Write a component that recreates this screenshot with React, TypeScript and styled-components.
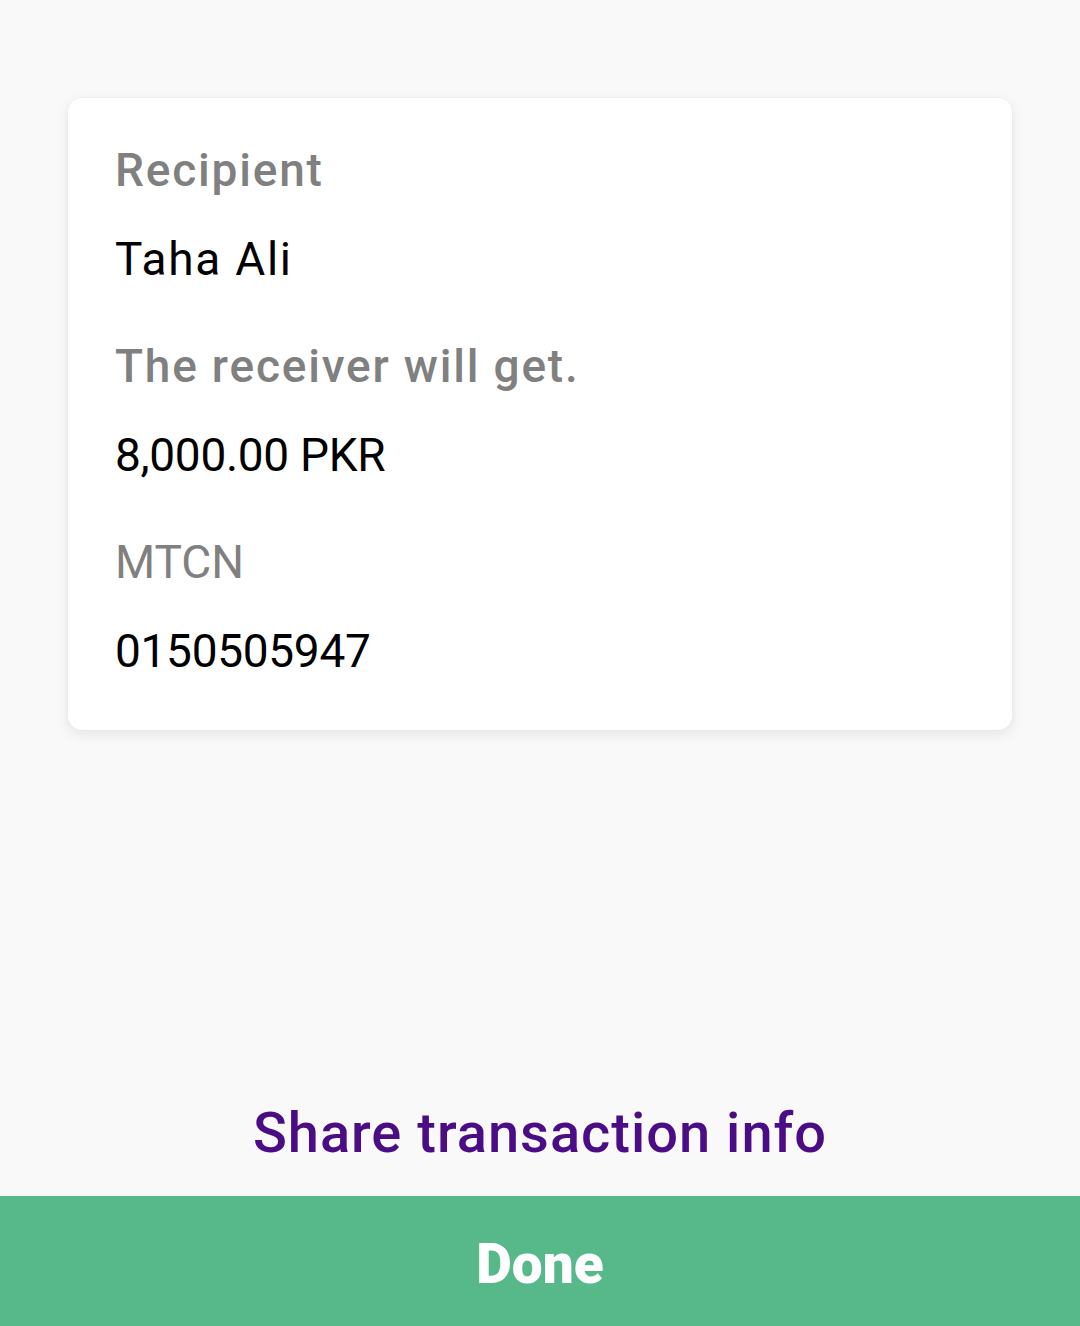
import React from "react";
import styled, { createGlobalStyle } from "styled-components";

const Global = createGlobalStyle`
  html, body { margin: 0; padding: 0; background: #f9f9f9; }
  body { font-family: Roboto, "Liberation Sans", Arial, sans-serif; }
`;

const Screen = styled.div`
  display: flex;
  flex-direction: column;
  height: 1326px;
  background: #f9f9f9;
`;

const Card = styled.section`
  margin: 98px 68px 0;
  padding: 44px 47px 51px;
  background: #ffffff;
  border-radius: 14px;
  box-shadow: 0 4px 14px rgba(0, 0, 0, 0.09), 0 0 2px rgba(0, 0, 0, 0.05);
  display: flex;
  flex-direction: column;
  gap: 51px;
`;

const Field = styled.div`
  display: flex;
  flex-direction: column;
  gap: 33px;
`;

const Label = styled.div<{ $plain?: boolean }>`
  font-family: Roboto, "Liberation Sans", sans-serif;
  font-size: 46px;
  line-height: 56px;
  color: #808080;
  font-weight: ${(p) => (p.$plain ? 400 : 500)};
  letter-spacing: ${(p) => (p.$plain ? "0" : "1.8px")};
`;

const Value = styled.div<{ $numeric?: boolean }>`
  font-family: Roboto, "Liberation Sans", sans-serif;
  font-size: 46px;
  line-height: 56px;
  color: #000000;
  font-weight: 400;
  letter-spacing: ${(p) => (p.$numeric ? "-0.3px" : "1.7px")};
`;

const Spacer = styled.div`
  flex: 1;
`;

const ShareLink = styled.button`
  border: none;
  background: transparent;
  padding: 0;
  margin: 0 0 30px;
  font-family: Roboto, "Liberation Sans", Arial, sans-serif;
  font-size: 56px;
  line-height: 66px;
  font-weight: 500;
  letter-spacing: 1px;
  color: #4a0d85;
  text-align: center;
`;

const DoneButton = styled.button`
  height: 130px;
  border: none;
  margin: 0;
  background: #57b88a;
  color: #ffffff;
  font-family: Roboto, "Liberation Sans", Arial, sans-serif;
  font-size: 55px;
  font-weight: 900;
  display: flex;
  align-items: center;
  justify-content: center;
  padding: 6px 0 0;
`;

const fields = [
  { label: "Recipient", value: "Taha Ali", numeric: false, plain: false },
  { label: "The receiver will get.", value: "8,000.00 PKR", numeric: true, plain: false },
  { label: "MTCN", value: "0150505947", numeric: true, plain: true },
];

export default function App() {
  return (
    <>
      <Global />
      <Screen>
        <Card>
          {fields.map((f) => (
            <Field key={f.label}>
              <Label $plain={f.plain}>{f.label}</Label>
              <Value $numeric={f.numeric}>{f.value}</Value>
            </Field>
          ))}
        </Card>
        <Spacer />
        <ShareLink>Share transaction info</ShareLink>
        <DoneButton>Done</DoneButton>
      </Screen>
    </>
  );
}
